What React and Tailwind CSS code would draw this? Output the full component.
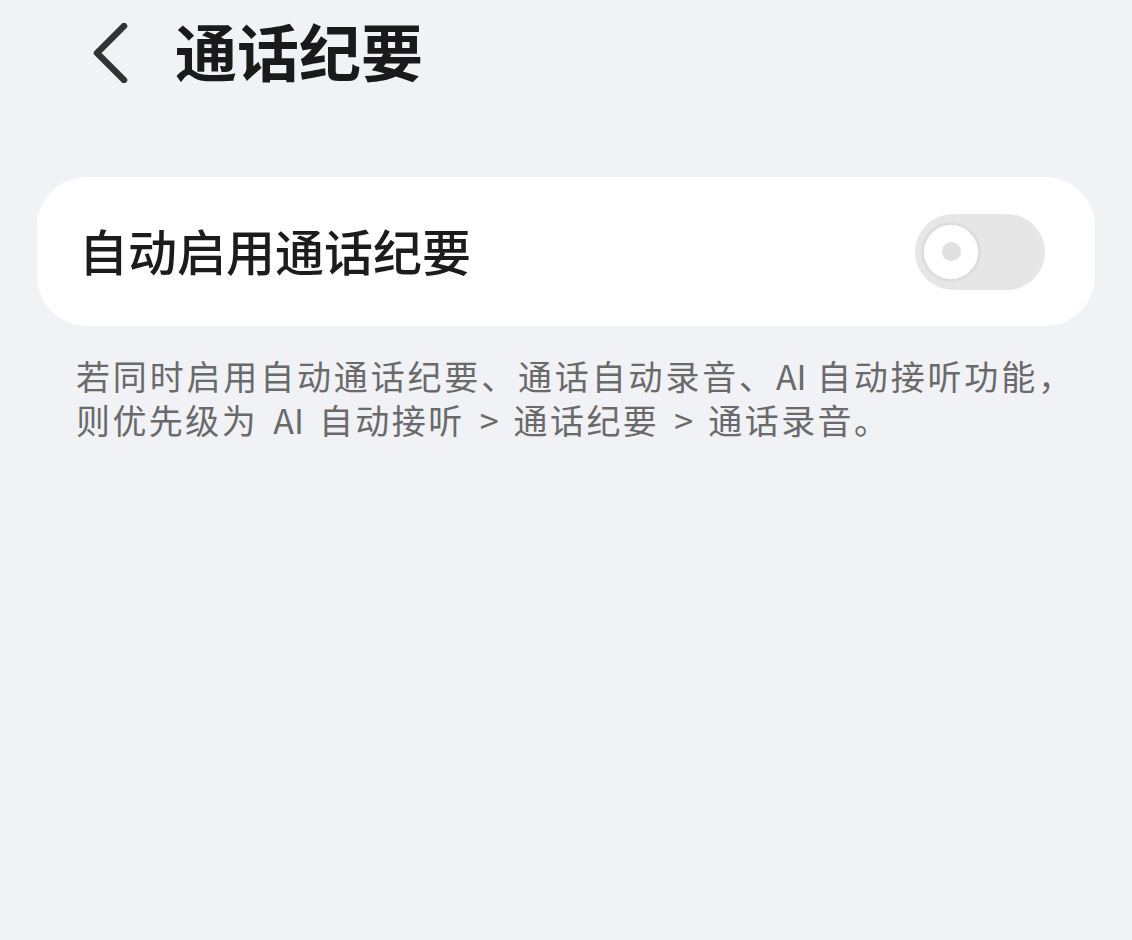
export default function App() {
  return (
    <div
      className="w-[1132px] h-[940px] bg-[#f1f2f6] overflow-hidden"
      style={{ fontFamily: '"Noto Sans CJK SC", "Noto Sans", sans-serif' }}
    >
      <header className="h-[106px] flex items-center pl-[92px]">
        <button className="w-[40px] h-[60px] flex items-center justify-center">
          <svg width="40" height="60" viewBox="0 0 40 60" fill="none">
            <polyline
              points="32,3 5,30 32,57"
              stroke="#333333"
              strokeWidth="6.5"
              strokeLinecap="round"
              strokeLinejoin="round"
            />
          </svg>
        </button>
        <h1 className="ml-[43px] mb-[6px] text-[62px] leading-none font-bold text-[#1a1a1a]">
          通话纪要
        </h1>
      </header>

      <section className="mt-[71px] mx-[37px] h-[149px] bg-white rounded-[50px] flex items-center justify-between pl-[42px] pr-[50px]">
        <span className="mb-[4px] text-[49px] leading-none font-medium text-[#1c1c1c]">自动启用通话纪要</span>
        <Toggle />
      </section>

      <div className="mt-[28px] pl-[76px] text-[34px] leading-[44px] text-[#6a6a6a] whitespace-nowrap">
        <p className="w-[996px] text-justify [text-align-last:justify] [text-justify:inter-character]">
          若同时启用自动通话纪要、通话自动录音、AI 自动接听功能，
        </p>
        <p className="w-[812px] text-justify [text-align-last:justify] [text-justify:inter-character] [word-spacing:5px]">
          则优先级为 AI 自动接听 &gt; 通话纪要 &gt; 通话录音。
        </p>
      </div>
    </div>
  );
}

function Toggle() {
  return (
    <div className="w-[130px] h-[76px] rounded-full bg-[#e6e6e6] flex items-center pl-[6px]">
      <div className="w-[60px] h-[60px] rounded-full bg-white border-[3px] border-[#dedede] flex items-center justify-center">
        <span className="w-[19px] h-[19px] rounded-full bg-[#e0e0e0]" />
      </div>
    </div>
  );
}
